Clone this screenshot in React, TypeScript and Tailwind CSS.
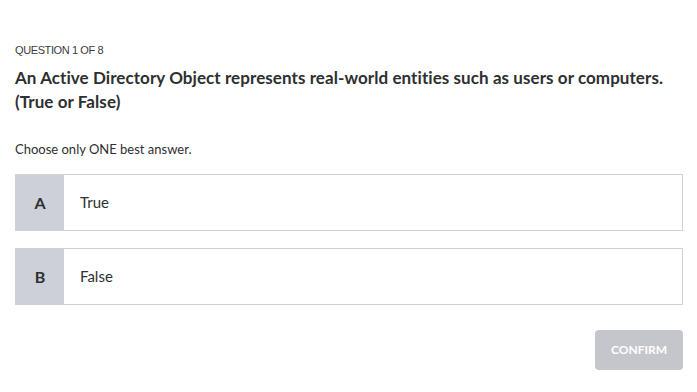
const options = [
  { key: "A", label: "True" },
  { key: "B", label: "False" },
];

export default function App() {
  return (
    <div className="min-h-[392px] w-[697px] bg-white px-[15px] pt-[42px] text-[#2d2f31] [font-family:Lato,'Liberation_Sans',sans-serif]">
      <p className="text-[11px] leading-[16px] tracking-[-0.4px] text-[#3c3c3c] [font-family:'Liberation_Sans',Arial,sans-serif]">
        QUESTION 1 OF 8
      </p>
      <h1 className="mt-[8px] text-[17px] font-bold leading-[24px] tracking-[0.07px] text-[#2d2f31]">
        An Active Directory Object represents real-world entities such as users or computers.
        <br />
        (True or False)
      </h1>
      <p className="mt-[26px] text-[13px] leading-[18px] text-[#2d2f31]">Choose only ONE best answer.</p>

      <div className="mt-[16px] flex w-[668px] flex-col gap-[17px]">
        {options.map((opt) => (
          <div key={opt.key} className="flex h-[57px] border border-[#d1d1d1] bg-white">
            <div className="flex w-[48px] items-center justify-center bg-[#cdd0d8] text-[16px] font-bold text-[#2d2f31]">
              {opt.key}
            </div>
            <div className="flex items-center pl-[16px] text-[15px] text-[#2d2f31]">{opt.label}</div>
          </div>
        ))}
      </div>

      <div className="mt-[25px] flex w-[668px] justify-end">
        <button className="h-[40px] w-[88px] rounded-[4px] bg-[#c5c6cc] text-[12px] font-bold text-white">
          CONFIRM
        </button>
      </div>
    </div>
  );
}
